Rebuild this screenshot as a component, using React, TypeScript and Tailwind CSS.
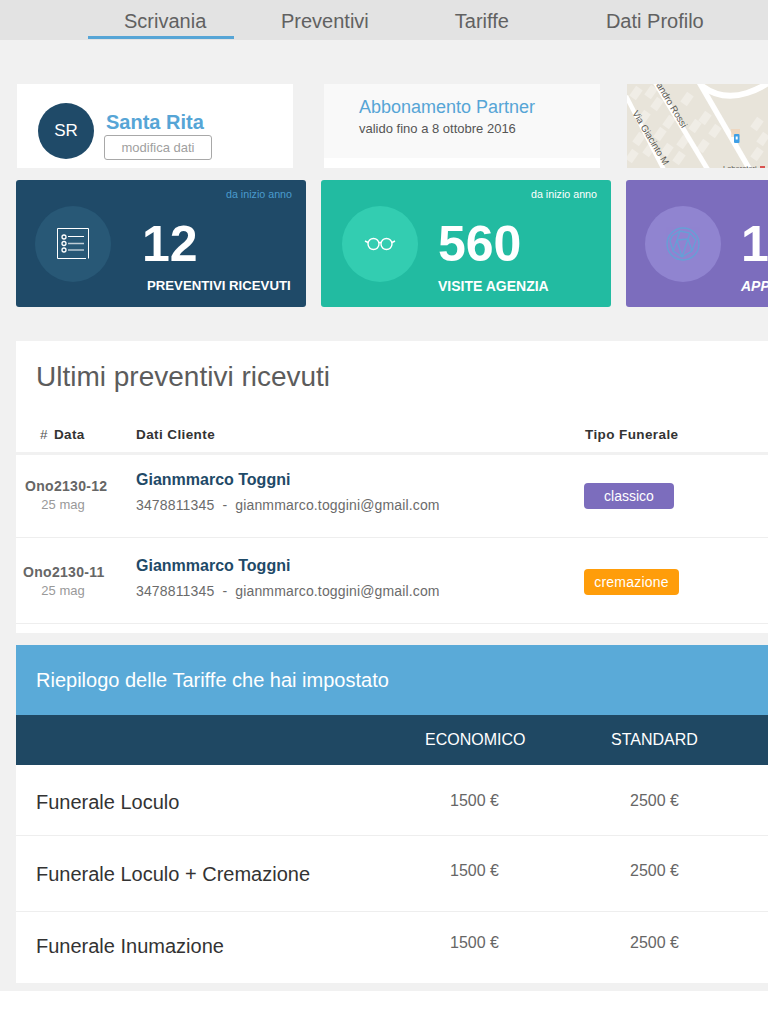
const font = { fontFamily: '"Liberation Sans", Arial, sans-serif' };

const tariffe = [
  { name: "Funerale Loculo", row: "h-[71px] border-b border-[#eeeeee]", nameClass: "pt-[3px]", priceClass: "pt-[1px]" },
  { name: "Funerale Loculo + Cremazione", row: "h-[76px] border-b border-[#eeeeee]", nameClass: "pt-[1px]", priceClass: "pb-[5px]" },
  { name: "Funerale Inumazione", row: "h-[71px]", nameClass: "pb-[3px]", priceClass: "pb-[9px]" },
];

const preventivi = [
  { code: "Ono2130-12", codeMargin: "ml-[9px]", tipo: "classico", badge: "bg-[#7c6dbd] w-[90px]", row: "h-[83px]" },
  { code: "Ono2130-11", codeMargin: "ml-[7px]", tipo: "cremazione", badge: "bg-[#ff9d0a] w-[95px] tracking-[0.2px]", row: "h-[86px] pt-[3px]" },
];

const blocks = [
  [9, 9], [24, 8], [17, 33], [30, 20], [42, 38], [33, 50], [12, 55], [22, 66], [40, 66], [5, 72],
  [68, 42], [56, 58], [78, 34], [88, 47], [76, 62], [60, 15], [130, 40], [136, 55], [130, 70], [52, 74],
];

function ListIcon() {
  return (
    <svg width="34" height="34" viewBox="0 0 34 34" fill="none" stroke="#ffffff" strokeWidth="1">
      <path d="M32.5 31.5V1.5H1.5V31.5H30" />
      <circle cx="8" cy="10" r="2" strokeWidth="1.3" />
      <circle cx="8" cy="16.5" r="2" strokeWidth="1.3" />
      <circle cx="8" cy="23" r="2" strokeWidth="1.3" />
      <path d="M12 9.5H28M12 23H28" />
      <path d="M12 16.5H28" strokeWidth="1.5" opacity="0.7" />
    </svg>
  );
}

function GlassesIcon() {
  return (
    <svg width="32" height="16" viewBox="0 0 32 16" fill="none" stroke="#ffffff" strokeWidth="1.4">
      <circle cx="9.5" cy="8" r="5.5" />
      <circle cx="22.5" cy="8" r="5.5" />
      <path d="M15 7Q16 6 17 7M4 6.5L1 5M28 6.5L31 5" />
    </svg>
  );
}

function GlobeIcon() {
  return (
    <svg width="36" height="36" viewBox="0 0 36 36" fill="none" stroke="#5ba8d8" strokeWidth="1.3" opacity="0.8">
      <circle cx="18" cy="18" r="16" />
      <path d="M7 10L15 5L25 7L31 14L27 25L17 31L8 25L5 15ZM15 5L12 14L8 25M12 14L23 13L27 25M23 13L25 7M23 13L17 31M12 14L17 31" />
    </svg>
  );
}

function MapPreview() {
  return (
    <svg width="141" height="84" viewBox="0 0 141 84" className="block">
      <rect width="141" height="84" fill="#e8e4da" />
      <g fill="#f0ede6">
        {blocks.map(([x, y]) => (
          <rect key={`${x}-${y}`} x={x - 4} y={y - 6} width="8" height="12" transform={`rotate(35 ${x} ${y})`} />
        ))}
      </g>
      <path d="M-1 12L37 86" stroke="#ffffff" strokeWidth="4.5" fill="none" />
      <path d="M28 -2L81 86" stroke="#ffffff" strokeWidth="5" fill="none" />
      <path d="M72 -2L123 86" stroke="#ffffff" strokeWidth="5.5" fill="none" />
      <path d="M75 2Q95 17 120 9Q132 5 141 -1" stroke="#ffffff" strokeWidth="6" fill="none" />
      <g fontFamily='"Liberation Sans", Arial, sans-serif' fontSize="9.5" fill="#5a5852">
        <text transform="translate(29 1) rotate(59)">andro Rossi</text>
        <text transform="translate(5 29) rotate(59)">Via Giacinto M</text>
        <text x="96" y="87" fontSize="7.5">Laboratori</text>
      </g>
      <rect x="104" y="45" width="9" height="8" fill="#f3c9a6" opacity="0.5" />
      <rect x="107" y="50" width="5.5" height="9" rx="1" fill="#3f9fe6" />
      <rect x="108.7" y="52.5" width="2" height="3" fill="#ffffff" />
      <rect x="133" y="82" width="5" height="2" fill="#d9534f" />
    </svg>
  );
}

function StatCard({
  bg,
  circle,
  note,
  noteColor,
  value,
  label,
  icon,
  padLeft,
  valueMargin,
  labelClass,
}: {
  bg: string;
  circle: string;
  note: string;
  noteColor: string;
  value: string;
  label: string;
  icon: React.ReactNode;
  padLeft: string;
  valueMargin: string;
  labelClass: string;
}) {
  return (
    <div className={`${bg} w-[290px] h-[127px] shrink-0 rounded-[3px] relative overflow-hidden`}>
      <div className={`absolute top-[8px] left-[210px] text-[10.7px] leading-[13px] whitespace-nowrap ${noteColor}`}>{note}</div>
      <div className={`flex pt-[26px] ${padLeft}`}>
        <div className={`${circle} w-[76px] h-[76px] rounded-full flex items-center justify-center shrink-0`}>{icon}</div>
        <div className={valueMargin}>
          <div className="text-[50px] leading-[76px] font-bold text-white">{value}</div>
          <div className={`text-[14px] leading-[16px] font-bold text-white -mt-[4px] whitespace-nowrap ${labelClass}`}>{label}</div>
        </div>
      </div>
    </div>
  );
}

export default function App() {
  return (
    <div className="w-[768px] overflow-hidden bg-white min-h-[1024px]" style={font}>
      <div className="h-[40px] bg-[#e3e3e3] flex text-[20px] text-[#616161]">
        <div className="ml-[88px] w-[146px] h-[39px] pl-[36px] pt-[9px] leading-[24px] border-b-[3px] border-[#56a5d6]">Scrivania</div>
        <div className="ml-[47px] pt-[9px] leading-[24px]">Preventivi</div>
        <div className="ml-[86px] pt-[9px] leading-[24px]">Tariffe</div>
        <div className="ml-[97px] pt-[9px] leading-[24px]">Dati Profilo</div>
      </div>

      <div className="bg-[#f1f1f1] h-[951px] pt-[44px]">
        {/* top cards */}
        <div className="flex h-[84px]">
          <div className="ml-[17px] w-[276px] h-[84px] bg-white shrink-0 flex pt-[19px] pl-[21px]">
            <div className="w-[56px] h-[56px] rounded-full bg-[#1f4a68] text-white text-[17px] flex items-center justify-center shrink-0">SR</div>
            <div className="ml-[10px] pt-[7px]">
              <div className="ml-[2px] text-[20px] leading-[24px] font-bold text-[#56a5d6]">Santa Rita</div>
              <div className="mt-[1px] w-[108px] h-[25px] border border-[#a8a8a8] rounded-[3px] text-[13px] leading-[24px] text-center text-[#a0a0a0]">modifica dati</div>
            </div>
          </div>
          <div className="ml-[31px] w-[276px] h-[84px] bg-white shrink-0">
            <div className="h-[74px] bg-[#f9f9f9] pl-[35px] pt-[12px]">
              <div className="text-[18px] leading-[22px] text-[#56a5d6]">Abbonamento Partner</div>
              <div className="text-[13px] leading-[22px] text-[#555555]">valido fino a 8 ottobre 2016</div>
            </div>
          </div>
          <div className="ml-[27px] shrink-0">
            <MapPreview />
          </div>
        </div>

        {/* stat cards */}
        <div className="flex gap-[15px] ml-[16px] mt-[12px]">
          <StatCard bg="bg-[#1f4a68]" circle="bg-[#285876]" note="da inizio anno" noteColor="text-[#4a9bce]" value="12" label="PREVENTIVI RICEVUTI" icon={<ListIcon />} padLeft="pl-[19px]" valueMargin="ml-[31px] [&>div:last-child]:ml-[5px]" labelClass="!text-[13.2px]" />
          <StatCard bg="bg-[#22bba1]" circle="bg-[#33cdb1]" note="da inizio anno" noteColor="text-white" value="560" label="VISITE AGENZIA" icon={<GlassesIcon />} padLeft="pl-[21px]" valueMargin="ml-[20px]" labelClass="" />
          <StatCard bg="bg-[#7c6dbd]" circle="bg-[#9084d0]" note="da inizio anno" noteColor="text-[#5d9bd6]" value="12" label="APPUNTAMENTI" icon={<GlobeIcon />} padLeft="pl-[19px]" valueMargin="ml-[20px]" labelClass="italic" />
        </div>

        {/* ultimi preventivi */}
        <div className="ml-[16px] mt-[34px] w-[800px] h-[292px] bg-white">
          <div className="pl-[20px] pt-[19px] text-[28px] leading-[34px] text-[#5c5c5c]">Ultimi preventivi ricevuti</div>
          <div className="flex h-[61px] pt-[33px] border-b-[3px] border-[#f1f1f1] text-[13.5px] leading-[16px] font-bold text-[#333333] tracking-[0.4px]">
            <div className="w-[120px] pl-[24px]">
              <span className="font-normal text-[#555555]">#</span>
              <span className="ml-[6px]">Data</span>
            </div>
            <div className="w-[449px]">Dati Cliente</div>
            <div>Tipo Funerale</div>
          </div>
          {preventivi.map((p) => (
            <div key={p.code} className={`flex ${p.row} border-b border-[#eeeeee]`}>
              <div className="w-[120px] pt-[22px] text-center">
                <div className={`text-[14px] leading-[18px] font-bold text-[#666666] tracking-[0.3px] whitespace-nowrap text-left ${p.codeMargin}`}>{p.code}</div>
                <div className="text-[13px] leading-[20px] text-[#999999] pr-[26px]">25 mag</div>
              </div>
              <div className="w-[448px] pt-[15px]">
                <div className="text-[16px] leading-[20px] font-bold text-[#1f4a68]">Gianmmarco Toggni</div>
                <div className="text-[14px] leading-[20px] text-[#6b6b6b] mt-[5px] tracking-[0.15px] whitespace-pre">3478811345  -  gianmmarco.toggini@gmail.com</div>
              </div>
              <div className="pt-[28px]">
                <div className={`${p.badge} h-[26px] rounded-[4px] text-white text-[14px] leading-[26px] text-center`}>{p.tipo}</div>
              </div>
            </div>
          ))}
        </div>

        {/* riepilogo tariffe */}
        <div className="ml-[16px] mt-[12px] w-[800px] bg-white">
          <div className="h-[70px] bg-[#5aaad8] pl-[20px] text-[20px] leading-[70px] text-white">Riepilogo delle Tariffe che hai impostato</div>
          <div className="h-[50px] bg-[#1f4863] flex text-white text-[16px] leading-[50px]">
            <div className="w-[409px]"></div>
            <div className="w-[180px]">ECONOMICO</div>
            <div className="ml-[6px]">STANDARD</div>
          </div>
          {tariffe.map((t) => (
            <div key={t.name} className={`flex items-center ${t.row}`}>
              <div className={`w-[434px] pl-[20px] text-[20px] text-[#333333] ${t.nameClass}`}>{t.name}</div>
              <div className={`w-[180px] text-[16px] text-[#666666] ${t.priceClass}`}>1500 €</div>
              <div className={`text-[16px] text-[#666666] ${t.priceClass}`}>2500 €</div>
            </div>
          ))}
        </div>
      </div>
    </div>
  );
}
